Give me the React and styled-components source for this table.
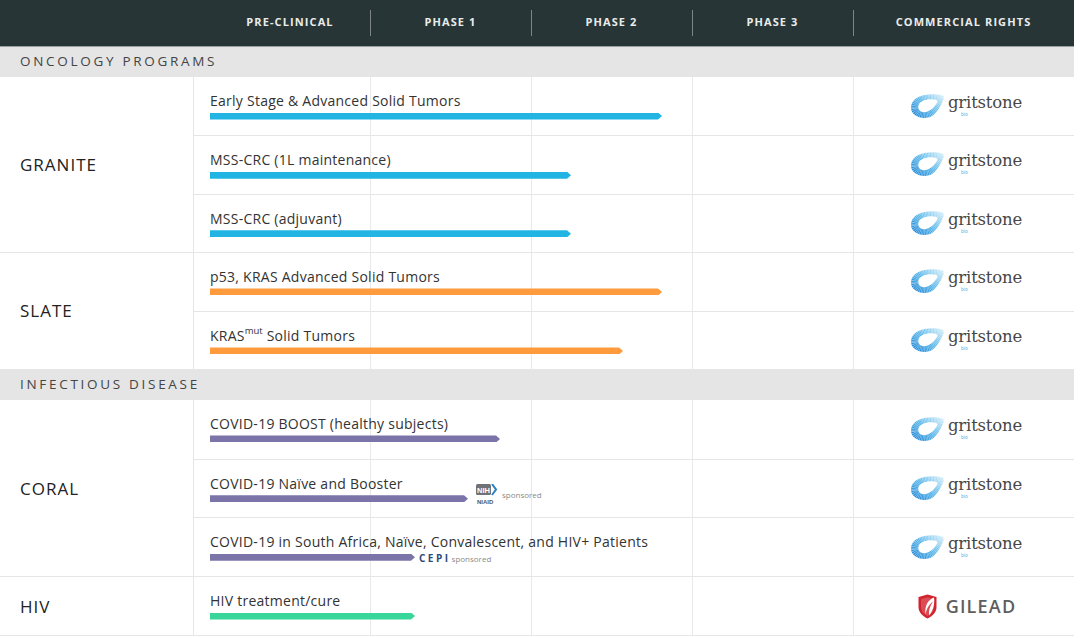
import React from "react";
import styled, { createGlobalStyle } from "styled-components";

const Global = createGlobalStyle`
  html, body { margin: 0; padding: 0; background: #fff; }
  body { font-family: "Open Sans", "Liberation Sans", sans-serif; color: #333; }
`;

const COLS = "194px 176px 161px 161px 161px 221px";
const ROWCOLS = "177px 161px 161px 161px 220px";

const Table = styled.div`
  width: 1074px;
`;

const Header = styled.div`
  display: grid;
  grid-template-columns: ${COLS};
  height: 46px;
  background: #283536;
  border-bottom: 1px solid #9aa0a0;
`;

const HeadCell = styled.div`
  display: flex;
  align-items: center;
  justify-content: center;
  padding: 0 0 3px ${(p) => p.$indent || 0}px;
  box-sizing: border-box;
  color: #e9ecec;
  font-size: 11px;
  font-weight: 700;
  letter-spacing: 1.1px;
  position: relative;
  &::before {
    content: "";
    display: ${(p) => (p.$divider ? "block" : "none")};
    position: absolute;
    left: 0;
    top: 10px;
    bottom: 10px;
    width: 1px;
    background: #7d8585;
  }
`;

const Section = styled.div`
  height: ${(p) => p.$h || 30}px;
  background: #e5e5e5;
  display: flex;
  align-items: center;
  padding: 0 0 2px 20px;
  box-sizing: border-box;
  font-size: 13.5px;
  letter-spacing: 2.7px;
  color: #444;
`;

const Group = styled.div`
  display: flex;
  border-bottom: 1px solid #e6e6e6;
`;

const Name = styled.div`
  width: 194px;
  flex: none;
  border-right: 1px solid #e6e6e6;
  display: flex;
  align-items: center;
  padding-left: 20px;
  box-sizing: border-box;
  font-size: 17px;
  letter-spacing: 1px;
  color: #222;
`;

const Rows = styled.div`
  display: flex;
  flex-direction: column;
`;

const Row = styled.div`
  display: grid;
  grid-template-columns: ${ROWCOLS};
  height: ${(p) => p.$h}px;
  box-sizing: border-box;
  & + & { border-top: 1px solid #e6e6e6; }
`;

const PhaseCell = styled.div`
  grid-row: 1;
  grid-column: ${(p) => p.$col};
  border-right: 1px solid #e9e9e9;
`;

const Indication = styled.div`
  grid-row: 1;
  grid-column: 1 / 5;
  padding: 14px 0 0 16px;
  display: flex;
  flex-direction: column;
  z-index: 1;
`;

const Label = styled.div`
  font-size: 14px;
  letter-spacing: 0.25px;
  color: #333;
  line-height: 19px;
  height: 19px;
  white-space: nowrap;
  sup { font-size: 9.5px; line-height: 0; position: relative; top: -1px; letter-spacing: 0; }
`;

const BarLine = styled.div`
  display: flex;
  align-items: center;
  height: 12px;
`;

const Bar = styled.div`
  height: 7px;
  background: ${(p) => p.$color};
  clip-path: polygon(0 0, calc(100% - 4px) 0, 100% 50%, calc(100% - 4px) 100%, 0 100%);
  flex: none;
`;

const Sponsor = styled.div`
  display: flex;
  align-items: center;
  gap: 4px;
  margin-left: ${(p) => p.$gap}px;
  font-size: 8px;
  color: #8a8a8a;
  position: relative;
  top: ${(p) => p.$dy || 0}px;
`;

const Cepi = styled.span`
  font-size: 10px;
  font-weight: 700;
  letter-spacing: 2.5px;
  color: #2d4a78;
`;

const Rights = styled.div`
  grid-row: 1;
  grid-column: 5;
  display: flex;
  align-items: center;
  justify-content: center;
`;

const LogoWrap = styled.div`
  display: flex;
  align-items: center;
  gap: ${(p) => p.$gap || 3}px;
  position: relative;
  left: ${(p) => p.$dx || 0}px;
  top: ${(p) => p.$dy || 0}px;
`;

const GritBlock = styled.div`
  display: flex;
  flex-direction: column;
  margin-top: -2px;
`;

const GritText = styled.div`
  font-family: "DejaVu Serif", "Liberation Serif", serif;
  font-size: 16.5px;
  color: #474747;
  letter-spacing: -0.2px;
  line-height: 18px;
`;

const Bio = styled.div`
  font-family: "Open Sans", sans-serif;
  font-size: 4.5px;
  line-height: 5px;
  color: #3aa6e0;
  padding-left: 13px;
`;

const GileadText = styled.div`
  font-family: "Open Sans", sans-serif;
  font-size: 18px;
  font-weight: 600;
  letter-spacing: 1.2px;
  color: #5e5e5e;
`;

function Gritstone() {
  return (
    <LogoWrap $dx={2} $gap={3}>
      <svg width="35" height="27" viewBox="0 0 34 26">
        <defs>
          <linearGradient id="gg" x1="0" y1="1" x2="1" y2="0.1">
            <stop offset="0" stopColor="#167cd2" />
            <stop offset="0.5" stopColor="#4fb2e8" />
            <stop offset="1" stopColor="#d4eefa" />
          </linearGradient>
        </defs>
        <path
          fillRule="evenodd"
          fill="url(#gg)"
          d="M1 14 C1 5 11 1 22 1 C29 1 34 2 33 5 C31 10 28 17 23 21 C16 27 1 24 1 14 Z
             M8 13.5 C8 8.5 14 6 21 6 C25 6 27.5 7 26.5 9 C24.5 12 22.5 15 19 17 C14 20 8 18.5 8 13.5 Z"
        />
        <path
          d="M4.5 14 C4.5 7 12.5 3.5 22 3.5 C27.5 3.5 31 4.5 30 7 C28 11 25.5 16 21 19 C15.5 23.5 4.5 21 4.5 14 Z"
          fill="none"
          stroke="#fff"
          strokeOpacity="0.55"
          strokeWidth="7"
          strokeDasharray="0.5 0.9"
        />
      </svg>
      <GritBlock>
        <GritText>gritstone</GritText>
        <Bio>bio</Bio>
      </GritBlock>
    </LogoWrap>
  );
}

function Gilead() {
  return (
    <LogoWrap $dx={3} $gap={9}>
      <svg width="19" height="25" viewBox="0 0 19 25">
        <path d="M0.5 3 L9.5 0.5 L18.5 3 L18.5 13 C18.5 19 13.5 22.5 9.5 24.5 C5.5 22.5 0.5 19 0.5 13 Z" fill="#d0252f" />
        <path d="M3 5 L9.5 3.2 L16 5 L16 13 C16 17.5 12.5 20.5 9.5 22 C6.5 20.5 3 17.5 3 13 Z" fill="#e8747a" opacity="0.5" />
        <path d="M16 3.5 C10 6 6.5 11.5 7.5 20.5 C8.5 15 10.5 11 15 7.5 C12 12 10.5 16.5 11 21.5 C15 17 17 10 16 3.5 Z" fill="#fff" />
      </svg>
      <GileadText>GILEAD</GileadText>
    </LogoWrap>
  );
}

function Nih() {
  return (
    <svg width="22" height="21" viewBox="0 0 22 21">
      <rect x="0" y="0" width="15" height="11" rx="1.5" fill="#6f7378" />
      <text x="7.5" y="8.5" textAnchor="middle" fontSize="7.5" fontWeight="700" fill="#fff" fontFamily="Liberation Sans, sans-serif">NIH</text>
      <path d="M16 0 L20 5.5 L16 11" fill="none" stroke="#2a7fc6" strokeWidth="2" />
      <text x="1" y="19.5" fontSize="6" fontWeight="700" fill="#555" fontFamily="Liberation Sans, sans-serif">NIAID</text>
    </svg>
  );
}

const BLUE = "#22b5e3";
const ORANGE = "#ff9a3d";
const PURPLE = "#7b74a9";
const GREEN = "#39d69c";

const data = [
  { section: "ONCOLOGY PROGRAMS", h: 30 },
  {
    name: "GRANITE",
    h: 58.34,
    rows: [
      { label: "Early Stage & Advanced Solid Tumors", w: 452, c: BLUE },
      { label: "MSS-CRC (1L maintenance)", w: 361, c: BLUE },
      { label: "MSS-CRC (adjuvant)", w: 361, c: BLUE },
    ],
  },
  {
    name: "SLATE",
    h: 58,
    rows: [
      { label: "p53, KRAS Advanced Solid Tumors", w: 452, c: ORANGE },
      { label: <>KRAS<sup>mut</sup> Solid Tumors</>, w: 413, c: ORANGE },
    ],
  },
  { section: "INFECTIOUS DISEASE", h: 30 },
  {
    name: "CORAL",
    h: 58.7,
    rows: [
      { label: "COVID-19 BOOST (healthy subjects)", w: 290, c: PURPLE },
      { label: "COVID-19 Naïve and Booster", w: 258, c: PURPLE, sponsor: "nih" },
      { label: "COVID-19 in South Africa, Naïve, Convalescent, and HIV+ Patients", w: 205, c: PURPLE, sponsor: "cepi" },
    ],
  },
  {
    name: "HIV",
    h: 58,
    rows: [{ label: "HIV treatment/cure", w: 205, c: GREEN, gilead: true }],
  },
];

export default function App() {
  return (
    <>
      <Global />
      <Table>
        <Header>
          <HeadCell />
          <HeadCell $indent={16}>PRE-CLINICAL</HeadCell>
          <HeadCell $divider>PHASE 1</HeadCell>
          <HeadCell $divider>PHASE 2</HeadCell>
          <HeadCell $divider>PHASE 3</HeadCell>
          <HeadCell $divider>COMMERCIAL RIGHTS</HeadCell>
        </Header>
        {data.map((g, i) =>
          g.section ? (
            <Section key={i} $h={g.h}>{g.section}</Section>
          ) : (
            <Group key={i}>
              <Name>{g.name}</Name>
              <Rows>
                {g.rows.map((r, j) => (
                  <Row key={j} $h={g.h}>
                    <PhaseCell $col={1} />
                    <PhaseCell $col={2} />
                    <PhaseCell $col={3} />
                    <PhaseCell $col={4} />
                    <Indication>
                      <Label>{r.label}</Label>
                      <BarLine>
                        <Bar $color={r.c} style={{ width: r.w }} />
                        {r.sponsor === "nih" && (
                          <Sponsor $gap={8} $dy={-4}>
                            <Nih />
                            <span>sponsored</span>
                          </Sponsor>
                        )}
                        {r.sponsor === "cepi" && (
                          <Sponsor $gap={4} $dy={1}>
                            <Cepi>CEPI</Cepi>
                            <span style={{ marginLeft: -3 }}>sponsored</span>
                          </Sponsor>
                        )}
                      </BarLine>
                    </Indication>
                    <Rights>{r.gilead ? <Gilead /> : <Gritstone />}</Rights>
                  </Row>
                ))}
              </Rows>
            </Group>
          )
        )}
      </Table>
    </>
  );
}
